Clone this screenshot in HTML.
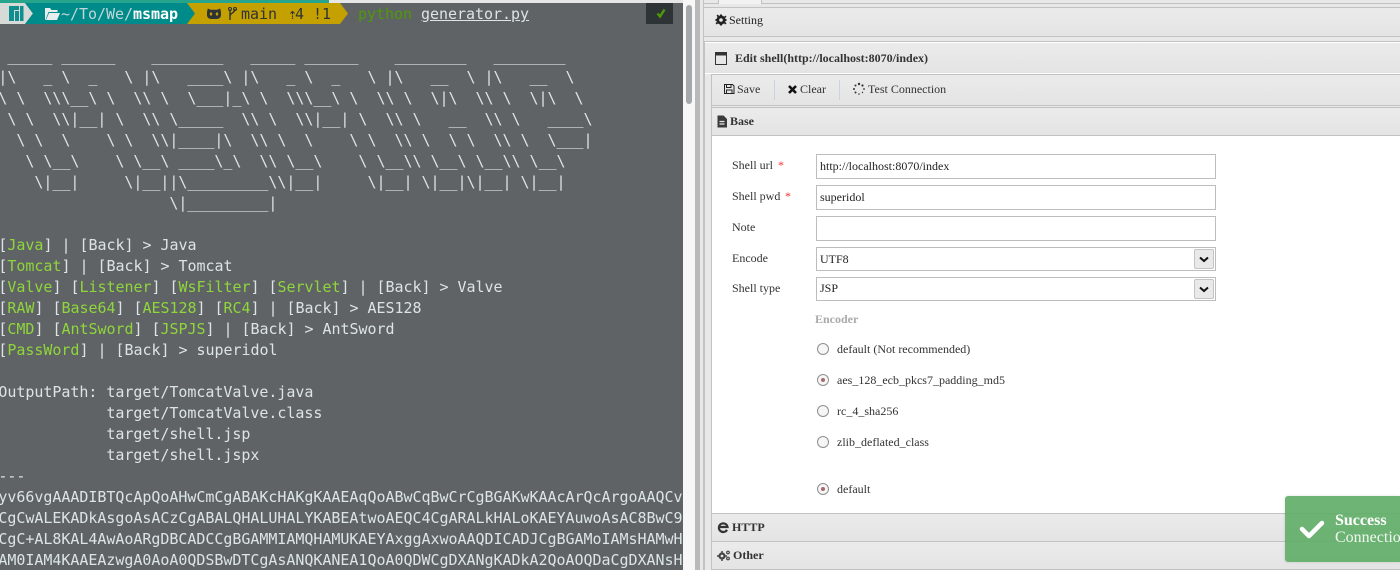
<!DOCTYPE html>
<html><head><meta charset="utf-8">
<style>
html,body{margin:0;padding:0;width:1400px;height:570px;overflow:hidden;background:#e8e8e8;}
*{box-sizing:border-box;}
.a{position:absolute;}
#term{position:absolute;left:0;top:0;width:683px;height:570px;background:#5f6366;overflow:hidden;
 font:15px/21px "DejaVu Sans Mono",monospace;color:#dce4e4;letter-spacing:-0.03px;}
#term pre{position:absolute;left:-1.6px;top:46px;margin:0;font:inherit;white-space:pre;}
#term pre b{font-weight:normal;color:#8fd63a;}
#term span.t{position:absolute;top:4px;line-height:21px;white-space:pre;}
.bar{position:absolute;background:linear-gradient(#ebebeb,#e4e4e4);}
.ln{position:absolute;background:#c2c2c2;}
.lab{position:absolute;font:12px/14px "Liberation Serif",serif;color:#333;white-space:pre;}
.inp{position:absolute;left:816px;width:400px;background:#fff;border:1px solid #bdbdbd;font:12px/14px "Liberation Serif",serif;color:#222;padding-left:3px;}
.sb{position:absolute;left:1194px;width:20px;height:20px;background:#e9e9e9;border:1px solid #c4c4c4;border-radius:2px;}
.rd{position:absolute;left:817px;width:12px;height:12px;border:1px solid #8f8f8f;border-radius:50%;background:#f6f6f6;}
.rd.on::after{content:"";position:absolute;left:3px;top:3px;width:4px;height:4px;border-radius:50%;background:#a86a6a;}
</style></head>
<body>
<div id="term">
 <div class="a" style="left:0;top:0;width:329px;height:3px;background:#27a58c"></div>
 <div class="a" style="left:329px;top:0;width:354px;height:3px;background:#e6e6e6"></div>
 <svg class="a" style="left:0;top:3px" width="350" height="21">
  <rect x="0" y="0" width="25" height="21" fill="#d7dad6"/>
  <polygon points="25,0 33,10.5 25,21" fill="#d7dad6"/>
  <polygon points="25,0 187,0 195,10.5 187,21 25,21 33,10.5" fill="#008b8b"/>
  <polygon points="187,0 340,0 348,10.5 340,21 187,21 195,10.500" fill="#c4a000"/>
  <path d="M9 3h10v4h-5v11h-5zM15 8h4v10h-4zM20 3h3.500v15h-3.500z" fill="#0f8f8f"/>
  <path d="M45 17V5h5l1.500 2h6v2h-9l-3 8zM46 17l3-7h11l-3 7z" fill="#e8eeee"/>
  <path d="M207 9l.8-3.500 3 1.200h6.400l3-1.200.8 3.500v3c0 2.500-2 4-4.500 4h-5c-2.500 0-4.500-1.500-4.500-4z" fill="#2e3436"/>
  <ellipse cx="211" cy="11" rx="1.200" ry="1.600" fill="#c4a000"/><ellipse cx="217" cy="11" rx="1.200" ry="1.600" fill="#c4a000"/>
  <path d="M230 6.500v10.500M230 13c0-3 5-3 5-7" fill="none" stroke="#2e3436" stroke-width="1.400"/>
  <circle cx="230" cy="6" r="1.500" fill="none" stroke="#2e3436"/><circle cx="235" cy="6" r="1.500" fill="none" stroke="#2e3436"/>
 </svg>
 <div class="a" style="left:646px;top:3px;width:27px;height:21px;background:#2e3436"></div>
 <svg class="a" style="left:646px;top:3px" width="27" height="21"><path d="M11.500 10.500l2.500 3 4.500-7" fill="none" stroke="#4e9a06" stroke-width="2.400"/></svg>
 <span class="t" style="left:61px;color:#c0d6d6">~/To/We/<span style="color:#fff;font-weight:bold">msmap</span></span>
 <span class="t" style="left:241px;color:#2e3436">main</span>
 <span class="t" style="left:288px;color:#2e3436">⇡</span>
 <span class="t" style="left:295px;color:#2e3436">4 !1</span>
 <span class="t" style="left:358px;color:#4e9a06">python</span>
 <span class="t" style="left:421px;color:#dce4e4;text-decoration:underline">generator.py</span>
<pre>
 _____ ______    ________   _____ ______    ________   ________
|\   _ \  _   \ |\   ____\ |\   _ \  _   \ |\   __  \ |\   __  \
\ \  \\\__\ \  \\ \  \___|_\ \  \\\__\ \  \\ \  \|\  \\ \  \|\  \
 \ \  \\|__| \  \\ \_____  \\ \  \\|__| \  \\ \   __  \\ \   ____\
  \ \  \    \ \  \\|____|\  \\ \  \    \ \  \\ \  \ \  \\ \  \___|
   \ \__\    \ \__\ ____\_\  \\ \__\    \ \__\\ \__\ \__\\ \__\
    \|__|     \|__||\_________\\|__|     \|__| \|__|\|__| \|__|
                   \|_________|

[<b>Java</b>] | [Back] &gt; Java
[<b>Tomcat</b>] | [Back] &gt; Tomcat
[<b>Valve</b>] [<b>Listener</b>] [<b>WsFilter</b>] [<b>Servlet</b>] | [Back] &gt; Valve
[<b>RAW</b>] [<b>Base64</b>] [<b>AES128</b>] [<b>RC4</b>] | [Back] &gt; AES128
[<b>CMD</b>] [<b>AntSword</b>] [<b>JSPJS</b>] | [Back] &gt; AntSword
[<b>PassWord</b>] | [Back] &gt; superidol

OutputPath: target/TomcatValve.java
            target/TomcatValve.class
            target/shell.jsp
            target/shell.jspx
---
yv66vgAAADIBTQcApQoAHwCmCgABAKcHAKgKAAEAqQoABwCqBwCrCgBGAKwKAAcArQcArgoAAQCv
CgCwALEKADkAsgoAsACzCgABALQHALUHALYKABEAtwoAEQC4CgARALkHALoKAEYAuwoAsAC8BwC9
CgC+AL8KAL4AwAoARgDBCADCCgBGAMMIAMQHAMUKAEYAxggAxwoAAQDICADJCgBGAMoIAMsHAMwH
AM0IAM4KAAEAzwgA0AoA0QDSBwDTCgAsANQKANEA1QoA0QDWCgDXANgKADkA2QoAOQDaCgDXANsH</pre>
</div>

<div class="a" style="left:683px;top:0;width:12px;height:570px;background:#f7f7f7"></div>
<div class="a" style="left:686px;top:5px;width:6px;height:99px;background:#a4a8aa;border-radius:3px"></div>
<div class="a" style="left:695px;top:0;width:5px;height:570px;background:#b9b9b9"></div>
<div class="a" style="left:700px;top:0;width:700px;height:570px;background:#e8e8e8"></div>

<!-- right structure -->
<div class="ln" style="left:703px;top:0;width:1px;height:570px"></div>
<div class="ln" style="left:703px;top:3px;width:697px;height:1px"></div>
<div class="a" style="left:718px;top:0;width:44px;height:4px;background:#f2f2f2;border-left:1px solid #c2c2c2;border-right:1px solid #c2c2c2"></div>
<div class="ln" style="left:703px;top:7px;width:697px;height:1px"></div>
<div class="bar" style="left:704px;top:8px;width:696px;height:28px"></div>
<div class="ln" style="left:703px;top:36px;width:697px;height:1px"></div>
<div class="ln" style="left:704px;top:41px;width:696px;height:1px"></div>
<div class="a" style="left:705px;top:42px;width:695px;height:1px;background:#fff"></div>
<div class="bar" style="left:705px;top:43px;width:695px;height:30px"></div>
<div class="a" style="left:705px;top:73px;width:695px;height:1px;background:#fff"></div>
<div class="ln" style="left:704px;top:41px;width:1px;height:529px"></div>
<div class="ln" style="left:711px;top:74px;width:689px;height:1px"></div>
<div class="ln" style="left:711px;top:74px;width:1px;height:496px"></div>
<div class="bar" style="left:712px;top:75px;width:688px;height:30px"></div>
<div class="ln" style="left:712px;top:105px;width:688px;height:1px"></div>
<div class="ln" style="left:712px;top:107px;width:688px;height:1px"></div>
<div class="bar" style="left:712px;top:108px;width:688px;height:27px"></div>
<div class="ln" style="left:712px;top:135px;width:688px;height:1px"></div>
<div class="a" style="left:712px;top:136px;width:688px;height:377px;background:#fff"></div>
<div class="ln" style="left:712px;top:513px;width:688px;height:1px"></div>
<div class="bar" style="left:712px;top:514px;width:688px;height:27px"></div>
<div class="ln" style="left:712px;top:541px;width:688px;height:1px"></div>
<div class="bar" style="left:712px;top:542px;width:688px;height:27px"></div>
<div class="ln" style="left:712px;top:569px;width:688px;height:1px"></div>
<div class="a" style="left:774px;top:80px;width:1px;height:20px;background:#c8d4de"></div>
<div class="a" style="left:839px;top:80px;width:1px;height:20px;background:#c8d4de"></div>

<!-- bar icons -->
<svg class="a" style="left:700px;top:0;overflow:visible" width="60" height="570">
 <g fill="#222">
  <circle cx="21" cy="20" r="3.200" fill="none" stroke="#222" stroke-width="2.800"/>
  <path d="M20 14.500h2v2h-2zM20 23.500h2v2h-2zM15.500 19h2v2h-2zM24.500 19h2v2h-2zM16.500 15.500l1.500-1 1 1.500-1.500 1zM24 23l1.500-1 1 1.500-1.500 1zM16.500 24.500l-1-1.500 1.500-1 1 1.500zM24 17l1.500-1.500 1 1.500-1.500 1z"/>
 </g>
 <rect x="15.500" y="52.500" width="11" height="12" fill="none" stroke="#333" stroke-width="1"/>
 <rect x="15" y="52" width="12" height="3.500" fill="#333"/>
 <g fill="none" stroke="#222">
  <path d="M24.500 84.500h8l1.500 1.500v7.500h-9.500z"/><path d="M26.500 84.500v3h4.500v-3M26.500 93.500v-3.500h5.500v3.500"/>
 </g>
 <path d="M89 86l7 7M96 86l-7 7" stroke="#111" stroke-width="2.600" fill="none"/>
 <g fill="#333">
  <circle cx="159" cy="84" r="1.200"/><circle cx="155.500" cy="85.500" r="1"/><circle cx="154" cy="89" r="1"/><circle cx="155.500" cy="92.500" r="1"/><circle cx="159" cy="94" r=".8"/><circle cx="162.500" cy="92.500" r=".7"/><circle cx="164" cy="89" r=".9"/><circle cx="162.500" cy="85.500" r="1.100"/>
 </g>
 <path d="M17.500 115.500h6l3.500 3.500v8.500h-9.500z" fill="#3a3a3a"/>
 <path d="M19.500 121.500h5M19.500 124h5" stroke="#e6e6e6" stroke-width="1.200"/>
 <path d="M19 527H27.500A4.300 4.300 0 0 0 19 527A4.300 4.300 0 0 0 27 529.800" fill="none" stroke="#333" stroke-width="2.300"/>
 <circle cx="22" cy="556" r="2.500" fill="none" stroke="#444" stroke-width="2.200"/>
 <circle cx="28" cy="552.500" r="1.300" fill="none" stroke="#444" stroke-width="1.200"/>
 <circle cx="28" cy="558.500" r="1.300" fill="none" stroke="#444" stroke-width="1.200"/>
 <path d="M22 551v1.500M22 559.500v1.500M17 556h1.500M25.500 556h1.500" stroke="#444" stroke-width="1.500"/>
</svg>

<div class="lab" style="left:729px;top:13px;color:#222">Setting</div>
<div class="lab" style="left:735px;top:51px;font-weight:bold">Edit shell(http://localhost:8070/index)</div>
<div class="lab" style="left:737px;top:82px">Save</div>
<div class="lab" style="left:800px;top:82px">Clear</div>
<div class="lab" style="left:868px;top:82px">Test Connection</div>
<div class="lab" style="left:730px;top:114px;font-weight:bold">Base</div>
<div class="lab" style="left:732px;top:520px;font-weight:bold">HTTP</div>
<div class="lab" style="left:733px;top:548px;font-weight:bold">Other</div>

<!-- form -->
<div class="lab" style="left:732px;top:158px">Shell url</div><div class="lab" style="left:778px;top:158px;color:#e33">*</div>
<div class="lab" style="left:732px;top:189px">Shell pwd</div><div class="lab" style="left:785px;top:189px;color:#e33">*</div>
<div class="lab" style="left:732px;top:220px">Note</div>
<div class="lab" style="left:732px;top:251px">Encode</div>
<div class="lab" style="left:732px;top:281px">Shell type</div>

<div class="inp" style="top:154px;height:25px;line-height:22px">http://localhost:8070/index</div>
<div class="inp" style="top:185px;height:25px;line-height:22px">superidol</div>
<div class="inp" style="top:216px;height:25px;line-height:22px"></div>
<div class="inp" style="top:247px;height:24px;line-height:23px">UTF8</div>
<div class="inp" style="top:277px;height:24px;line-height:20px">JSP</div>
<div class="sb" style="top:249px"></div>
<div class="sb" style="top:279px"></div>
<svg class="a" style="left:1194px;top:249px" width="20" height="50">
 <path d="M6 8.500l4 3.500 4-3.500" fill="none" stroke="#111" stroke-width="2"/>
 <path d="M6 38.500l4 3.500 4-3.500" fill="none" stroke="#111" stroke-width="2"/>
</svg>

<div class="lab" style="left:815px;top:312px;font-weight:bold;color:#aaa">Encoder</div>
<div class="rd" style="top:343px"></div><div class="lab" style="left:837px;top:342px">default (Not recommended)</div>
<div class="rd on" style="top:374px"></div><div class="lab" style="left:837px;top:373px">aes_128_ecb_pkcs7_padding_md5</div>
<div class="rd" style="top:405px"></div><div class="lab" style="left:837px;top:404px">rc_4_sha256</div>
<div class="rd" style="top:436px"></div><div class="lab" style="left:837px;top:435px">zlib_deflated_class</div>
<div class="rd on" style="top:483px"></div><div class="lab" style="left:837px;top:482px">default</div>

<!-- toast -->
<div class="a" style="left:1285px;top:496px;width:115px;height:66px;background:rgba(98,175,105,.92);border-radius:3px 0 0 3px;box-shadow:0 0 3px rgba(0,0,0,.12);overflow:hidden;font-family:'Liberation Serif',serif;color:#fff">
 <svg class="a" style="left:14px;top:22px" width="26" height="22"><path d="M3 11l7 7L23 5" fill="none" stroke="#fff" stroke-width="4.500" stroke-linecap="round" stroke-linejoin="round"/></svg>
 <div class="a" style="left:50px;top:16px;font:bold 16px/18px 'Liberation Serif',serif;white-space:nowrap">Success</div>
 <div class="a" style="left:50px;top:33px;font:16px/18px 'Liberation Serif',serif;white-space:nowrap;color:#f0f7f0">Connection success</div>
</div>
</body></html>
